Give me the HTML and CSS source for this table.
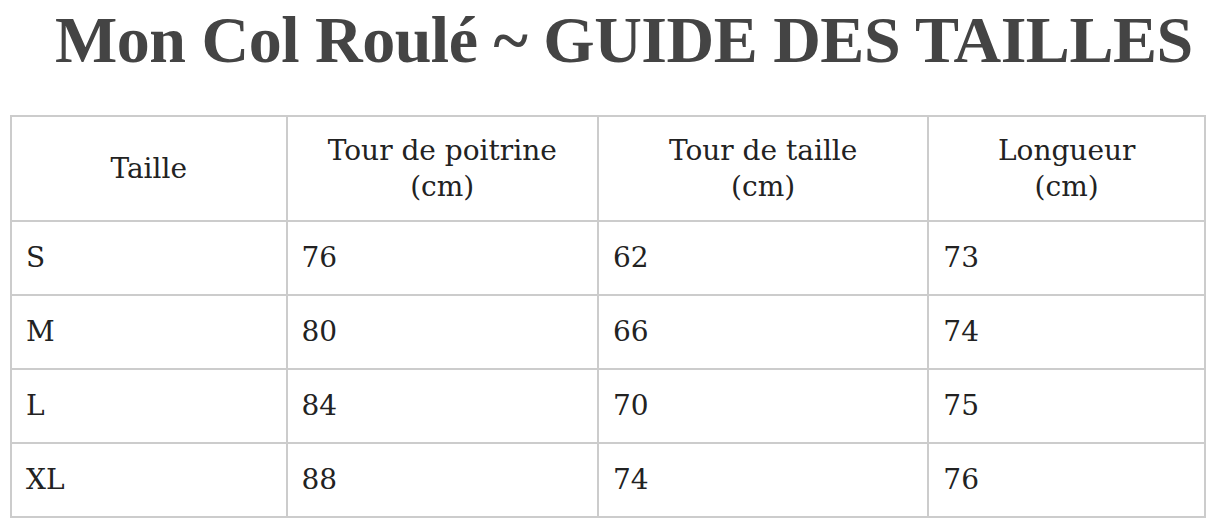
FILE: index.html
```html
<!DOCTYPE html>
<html lang="fr">
<head>
<meta charset="utf-8">
<title>Mon Col Roulé ~ Guide des tailles</title>
<link rel="stylesheet" href="styles.css">
</head>
<body>
<main class="page">
  <h1 class="title">Mon Col Roulé ~ GUIDE DES TAILLES</h1>
  <table class="sizes">
    <colgroup>
      <col class="c1"><col class="c2"><col class="c3"><col class="c4">
    </colgroup>
    <thead>
      <tr>
        <th>Taille</th>
        <th>Tour de poitrine<br>(cm)</th>
        <th>Tour de taille<br>(cm)</th>
        <th>Longueur<br>(cm)</th>
      </tr>
    </thead>
    <tbody>
      <tr><td>S</td><td>76</td><td>62</td><td>73</td></tr>
      <tr><td>M</td><td>80</td><td>66</td><td>74</td></tr>
      <tr><td>L</td><td>84</td><td>70</td><td>75</td></tr>
      <tr><td>XL</td><td>88</td><td>74</td><td>76</td></tr>
    </tbody>
  </table>
</main>
</body>
</html>
```
FILE: styles.css
```css
html, body {
  margin: 0;
  padding: 0;
  background: #ffffff;
}
.page {
  padding: 0 10px 0 10px;
}
.title {
  margin: 0;
  padding: 4px 0 0 45px;
  height: 115px;
  box-sizing: border-box;
  font-family: "Liberation Serif", serif;
  font-weight: bold;
  font-size: 66px;
  letter-spacing: -0.5px;
  line-height: 72px;
  color: #444444;
  white-space: nowrap;
}
.sizes {
  width: 1196px;
  border-collapse: collapse;
  font-family: "DejaVu Serif", serif;
  font-size: 28px;
  color: #222222;
}
.c1 { width: 276px; }
.c2 { width: 312px; }
.c3 { width: 331px; }
.c4 { width: 277px; }
.sizes th,
.sizes td {
  border: 2px solid #cccccc;
  font-weight: normal;
}
.sizes th {
  height: 103px;
  text-align: center;
  line-height: 36px;
  padding: 0 10px;
}
.sizes td {
  height: 72px;
  text-align: left;
  padding: 0 14px;
  line-height: 36px;
}
```
